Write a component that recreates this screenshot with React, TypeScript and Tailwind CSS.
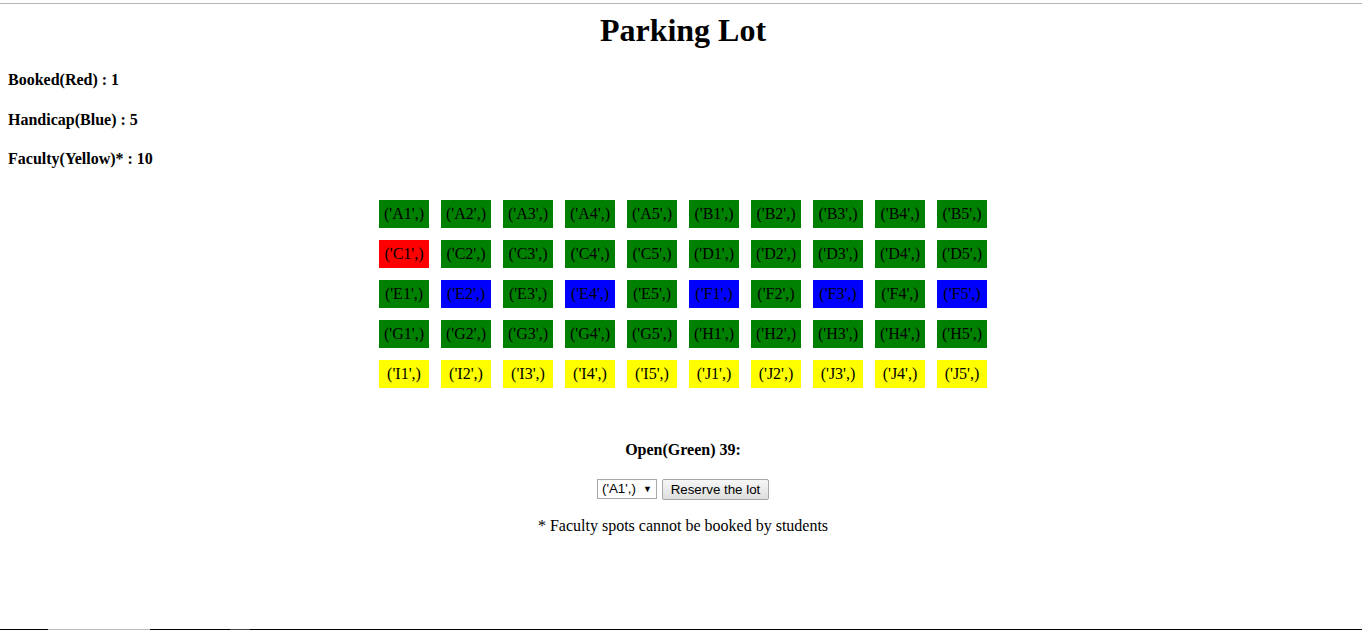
import React from "react";

const rows = [
  ["A1", "A2", "A3", "A4", "A5", "B1", "B2", "B3", "B4", "B5"],
  ["C1", "C2", "C3", "C4", "C5", "D1", "D2", "D3", "D4", "D5"],
  ["E1", "E2", "E3", "E4", "E5", "F1", "F2", "F3", "F4", "F5"],
  ["G1", "G2", "G3", "G4", "G5", "H1", "H2", "H3", "H4", "H5"],
  ["I1", "I2", "I3", "I4", "I5", "J1", "J2", "J3", "J4", "J5"],
];

const booked = new Set(["C1"]);
const handicap = new Set(["E2", "E4", "F1", "F3", "F5"]);

function cellClass(id: string) {
  if (booked.has(id)) return "bg-[#ff0000]";
  if (handicap.has(id)) return "bg-[#0000ff]";
  if (id.startsWith("I") || id.startsWith("J")) return "bg-[#ffff00]";
  return "bg-[#008000]";
}

export default function App() {
  return (
    <div
      className="h-[630px] flex flex-col bg-white text-black overflow-hidden"
      style={{ fontFamily: '"Liberation Serif", "Times New Roman", serif' }}
    >
      <div className="h-[3px] shrink-0" />
      <div className="h-px bg-[#b4b4b4] shrink-0" />
      <h1 className="mt-[8px] text-[32px] leading-[37px] font-bold text-center pl-[4px]">
        Parking Lot
      </h1>
      <div className="pl-[8px] text-[16px] leading-[18px] font-bold">
        <p className="mt-[22px]">Booked(Red) : 1</p>
        <p className="mt-[22px]">Handicap(Blue) : 5</p>
        <p className="mt-[21px]">Faculty(Yellow)* : 10</p>
      </div>
      <div className="mt-[32px] pl-[4px] flex justify-center">
        <div className="flex flex-col gap-[12px]">
          {rows.map((row, i) => (
            <div key={i} className="flex gap-[12px]">
              {row.map((id) => (
                <div
                  key={id}
                  className={`w-[50px] h-[28px] flex items-center justify-center text-[16px] leading-[18px] ${cellClass(id)}`}
                >
                  ('{id}',)
                </div>
              ))}
            </div>
          ))}
        </div>
      </div>
      <p className="mt-[53px] pl-[4px] text-center text-[16px] leading-[18px] font-bold">
        Open(Green) 39:
      </p>
      <div
        className="mt-[20px] pl-[4px] flex justify-center items-start gap-[5px] text-[13.33px]"
        style={{ fontFamily: '"Liberation Sans", Arial, sans-serif' }}
      >
        <div className="w-[60px] h-[20px] border border-[#a9a9a9] bg-white flex items-center justify-between pl-[4px] pr-[4px] leading-[16px]">
          <span>('A1',)</span>
          <span className="text-[9px] leading-[10px]">▼</span>
        </div>
        <div className="w-[107px] h-[21px] border border-[#a6a6a6] rounded-[2px] bg-gradient-to-b from-[#f6f6f6] to-[#dedede] flex items-center justify-center leading-[16px]">
          Reserve the lot
        </div>
      </div>
      <p className="mt-[17px] pl-[4px] text-center text-[16px] leading-[18px]">
        * Faculty spots cannot be booked by students
      </p>
      <div className="mt-auto h-px shrink-0 flex">
        <div className="w-[48px] bg-black" />
        <div className="w-[102px] bg-[#b9b9b9]" />
        <div className="w-[80px] bg-black" />
        <div className="w-[20px] bg-[#444444]" />
        <div className="flex-1 bg-black" />
      </div>
    </div>
  );
}
